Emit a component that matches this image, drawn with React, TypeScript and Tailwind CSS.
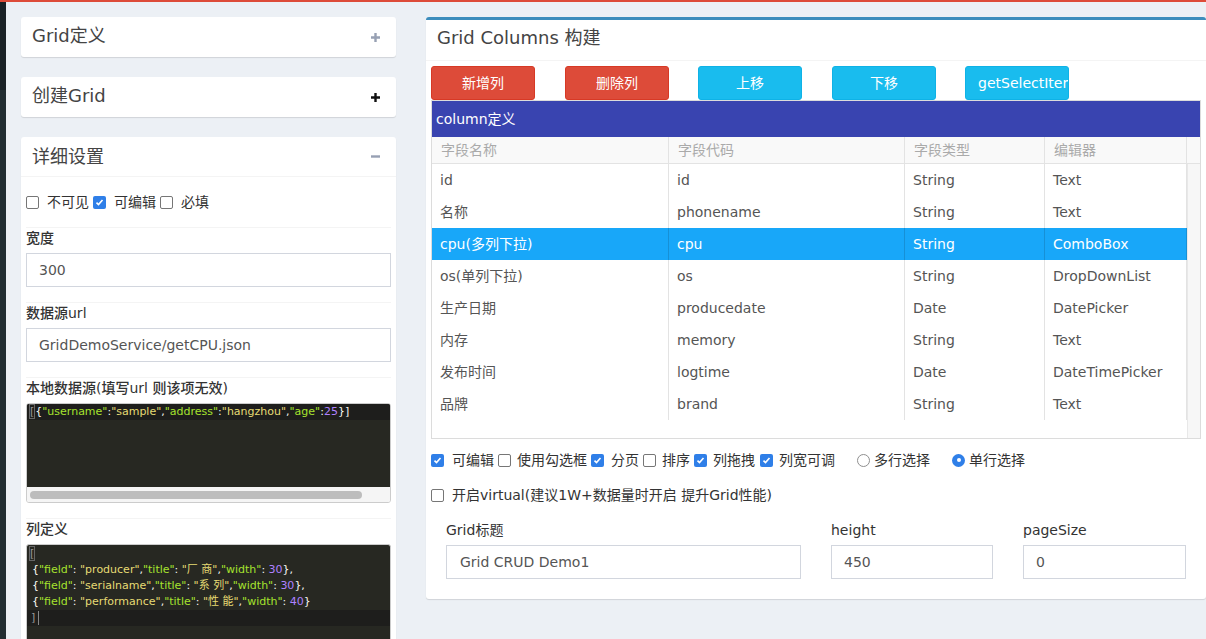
import React from "react";

const Plus = ({ color }: { color: string }) => (
  <svg width="11" height="11" viewBox="0 0 11 11">
    <path d="M5.5 1v9M1 5.5h9" stroke={color} strokeWidth="2.4" />
  </svg>
);
const Minus = ({ color }: { color: string }) => (
  <svg width="11" height="11" viewBox="0 0 11 11">
    <path d="M1 5.5h9" stroke={color} strokeWidth="2.4" />
  </svg>
);

const Check = ({ on }: { on: boolean }) =>
  on ? (
    <span className="w-[13px] h-[13px] rounded-[2px] bg-[#2f7fe8] flex items-center justify-center shrink-0">
      <svg width="9" height="9" viewBox="0 0 9 9">
        <path d="M1.5 4.6l2 2 4-4.6" stroke="#fff" strokeWidth="1.6" fill="none" />
      </svg>
    </span>
  ) : (
    <span className="w-[13px] h-[13px] rounded-[2px] border border-[#767676] bg-white shrink-0" />
  );

const Radio = ({ on }: { on: boolean }) =>
  on ? (
    <span className="w-[13px] h-[13px] rounded-full bg-[#2f7fe8] flex items-center justify-center shrink-0">
      <span className="w-[4px] h-[4px] rounded-full bg-white" />
    </span>
  ) : (
    <span className="w-[13px] h-[13px] rounded-full border border-[#8f8f8f] bg-white shrink-0" />
  );

const CardHead = ({ title, icon, border, up }: { title: string; icon: React.ReactNode; border?: boolean; up?: boolean }) => (
  <div
    className={
      "h-[40px] pl-[11px] pr-[15px] flex items-center justify-between text-[18px] text-[#444] " +
      (border ? "border-b border-[#f4f4f4]" : "")
    }
  >
    <span className={up ? "-translate-y-[2px]" : ""}>{title}</span>
    {icon}
  </div>
);

const K = ({ c }: { c: string }) => <span className="text-[#a6e22e]">{c}</span>;
const S = ({ c }: { c: string }) => <span className="text-[#e6db74]">{c}</span>;
const N = ({ c }: { c: string }) => <span className="text-[#ae81ff]">{c}</span>;

const rows = [
  ["id", "id", "String", "Text"],
  ["名称", "phonename", "String", "Text"],
  ["cpu(多列下拉)", "cpu", "String", "ComboBox"],
  ["os(单列下拉)", "os", "String", "DropDownList"],
  ["生产日期", "producedate", "Date", "DatePicker"],
  ["内存", "memory", "String", "Text"],
  ["发布时间", "logtime", "Date", "DateTimePicker"],
  ["品牌", "brand", "String", "Text"],
];

const widths = ["w-[237px]", "w-[236px]", "w-[140px]", "w-[142px]"];

export default function App() {
  return (
    <div className="w-[1206px] h-[639px] overflow-hidden bg-[#ecf0f5] flex flex-col font-[DejaVu_Sans,Noto_Sans_CJK_SC,sans-serif] text-[#333]">
      <div className="h-[2px] bg-[#dd4b39] shrink-0" />
      <div className="flex flex-1 min-h-0">
        <div className="w-[6px] shrink-0 flex flex-col">
          <div className="h-[88px] bg-[#1a2226]" />
          <div className="flex-1 bg-[#222d32]" />
        </div>
        <div className="flex flex-1 pt-[15px] pl-[15px] gap-[30px] items-start min-w-0">
          {/* left column */}
          <div className="w-[375px] shrink-0 flex flex-col gap-[20px]">
            <div className="bg-white rounded-[3px] shadow-[0_1px_1px_rgba(0,0,0,0.12)]">
              <CardHead title="Grid定义" icon={<Plus color="#97a0b3" />} up />
            </div>
            <div className="bg-white rounded-[3px] shadow-[0_1px_1px_rgba(0,0,0,0.12)]">
              <CardHead title="创建Grid" icon={<Plus color="#111" />} up />
            </div>
            <div className="bg-white rounded-[3px] shadow-[0_1px_1px_rgba(0,0,0,0.12)] h-[520px]">
              <CardHead title="详细设置" icon={<Minus color="#97a0b3" />} border />
              <div className="px-[5px] text-[14px]">
                <div className="pt-[15px] pb-[15px] h-[50px] flex items-center text-[#333]">
                  <Check on={false} />
                  <span className="ml-[8px] mr-[4px]">不可见</span>
                  <Check on={true} />
                  <span className="ml-[8px] mr-[4px]">可编辑</span>
                  <Check on={false} />
                  <span className="ml-[8px]">必填</span>
                </div>
                <div className="border-t border-[#f4f4f4] pb-[15px]">
                  <div className="h-[20px] leading-[20px] mb-[5px] font-medium">宽度</div>
                  <div className="h-[34px] border border-[#d2d6de] px-[12px] flex items-center text-[#555]">300</div>
                </div>
                <div className="border-t border-[#f4f4f4] pb-[15px]">
                  <div className="h-[20px] leading-[20px] mb-[5px] font-medium">数据源url</div>
                  <div className="h-[34px] border border-[#d2d6de] px-[12px] flex items-center text-[#555]">
                    GridDemoService/getCPU.json
                  </div>
                </div>
                <div className="border-t border-[#f4f4f4] pb-[15px]">
                  <div className="h-[20px] leading-[20px] mb-[5px] font-medium">本地数据源(填写url 则该项无效)</div>
                  <div className="h-[100px] border border-[#ccc] rounded-[3px] overflow-hidden flex flex-col">
                    <div className="flex-1 bg-[#272822]">
                      <div className="h-[16px] bg-[#1e1e1c] leading-[16px] text-[11px] pl-[2px] whitespace-nowrap text-[#f8f8f2]">
                        <span className="border border-[#666] text-[#999]">[</span>
                        {"{"}
                        <K c={'"username"'} />:<S c={'"sample"'} />,<K c={'"address"'} />:<S c={'"hangzhou"'} />,
                        <K c={'"age"'} />:<N c="25" />
                        {"}]"}
                      </div>
                    </div>
                    <div className="h-[15px] bg-[#f5f5f5] flex items-center px-[3px]">
                      <div className="w-[332px] h-[8px] rounded-full bg-[#bdbdbd]" />
                    </div>
                  </div>
                </div>
                <div className="border-t border-[#f4f4f4]">
                  <div className="h-[20px] leading-[20px] mb-[5px] font-medium">列定义</div>
                  <div className="h-[120px] border border-[#ccc] rounded-t-[3px] bg-[#272822] text-[11px] leading-[16px] text-[#f8f8f2] whitespace-nowrap pt-[1px]">
                    <div className="pl-[2px]">
                      <span className="border border-[#666] text-[#999]">[</span>
                    </div>
                    <div className="pl-[5px]">
                      {" {"}
                      <K c={'"field"'} />: <S c={'"producer"'} />,<K c={'"title"'} />: <S c={'"厂 商"'} />,
                      <K c={'"width"'} />: <N c="30" />
                      {"},"}
                    </div>
                    <div className="pl-[5px]">
                      {" {"}
                      <K c={'"field"'} />: <S c={'"serialname"'} />,<K c={'"title"'} />: <S c={'"系 列"'} />,
                      <K c={'"width"'} />: <N c="30" />
                      {"},"}
                    </div>
                    <div className="pl-[5px]">
                      {" {"}
                      <K c={'"field"'} />: <S c={'"performance"'} />,<K c={'"title"'} />: <S c={'"性 能"'} />,
                      <K c={'"width"'} />: <N c="40" />
                      {"}"}
                    </div>
                    <div className="pl-[4px] bg-[#1e1e1c] flex items-center text-[#999]">
                      ]<span className="ml-[3px] w-[1px] h-[14px] bg-[#888]" />
                    </div>
                  </div>
                </div>
              </div>
            </div>
          </div>

          {/* right panel */}
          <div className="w-[780px] shrink-0 bg-white rounded-[3px] border-t-[3px] border-[#3c8dbc] shadow-[0_1px_1px_rgba(0,0,0,0.12)]">
            <div className="h-[41px] border-b border-[#f4f4f4] px-[11px] flex items-center text-[18px] text-[#444]">
              <span className="-translate-y-[3px]">Grid Columns 构建</span>
            </div>
            <div className="p-[5px] pb-[20px] text-[14px]">
              <div className="flex h-[34px]">
                <button className="w-[104px] h-[34px] rounded-[3px] bg-[#dd4b39] border border-[#d73925] text-white">新增列</button>
                <button className="ml-[30px] w-[104px] h-[34px] rounded-[3px] bg-[#dd4b39] border border-[#d73925] text-white">删除列</button>
                <button className="ml-[29px] w-[104px] h-[34px] rounded-[3px] bg-[#19bcee] border border-[#0fb2e6] text-white">上移</button>
                <button className="ml-[30px] w-[104px] h-[34px] rounded-[3px] bg-[#19bcee] border border-[#0fb2e6] text-white">下移</button>
                <button className="ml-[29px] w-[104px] h-[34px] rounded-[3px] bg-[#19bcee] border border-[#0fb2e6] text-white overflow-hidden whitespace-nowrap text-left pl-[12px]">
                  getSelectItem
                </button>
              </div>
              {/* table */}
              <div className="border border-[#dcdcdc] h-[339px] flex flex-col">
                <div className="h-[36px] bg-[#3944b0] text-white flex items-center px-[4px] shrink-0">column定义</div>
                <div className="h-[27px] bg-[#f9f9f9] border-b border-[#e3e3e3] flex text-[#aaa] shrink-0">
                  {["字段名称", "字段代码", "字段类型", "编辑器"].map((h, i) => (
                    <div key={h} className={widths[i] + " border-r border-[#e3e3e3] px-[9px] flex items-center"}>
                      {h}
                    </div>
                  ))}
                  <div className="flex-1" />
                </div>
                <div className="flex flex-1">
                  <div className="w-[755px]">
                    {rows.map((r, ri) => {
                      const sel = ri === 2;
                      return (
                        <div key={ri} className={"h-[32px] flex " + (sel ? "bg-[#18a7f9] text-white" : "text-[#555]")}>
                          {r.map((c, ci) => (
                            <div
                              key={ci}
                              className={
                                widths[ci] +
                                " px-[8px] flex items-center whitespace-nowrap border-r " +
                                (sel ? "border-[#1690d6]" : "border-[#e3e3e3]")
                              }
                            >
                              {c}
                            </div>
                          ))}
                        </div>
                      );
                    })}
                  </div>
                  <div className="flex-1 bg-[#f7f7f7] border-l border-[#e8e8e8]" />
                </div>
              </div>
              {/* options */}
              <div className="mt-[11px] h-[20px] flex items-center text-[#333]">
                <Check on={true} />
                <span className="ml-[8px] mr-[4px]">可编辑</span>
                <Check on={false} />
                <span className="ml-[6px] mr-[4px]">使用勾选框</span>
                <Check on={true} />
                <span className="ml-[7px] mr-[4px]">分页</span>
                <Check on={false} />
                <span className="ml-[6px] mr-[4px]">排序</span>
                <Check on={true} />
                <span className="ml-[6px] mr-[5px]">列拖拽</span>
                <Check on={true} />
                <span className="ml-[6px] mr-[22px]">列宽可调</span>
                <Radio on={false} />
                <span className="ml-[4px] mr-[22px]">多行选择</span>
                <Radio on={true} />
                <span className="ml-[4px]">单行选择</span>
              </div>
              <div className="mt-[15px] h-[20px] flex items-center text-[#333]">
                <Check on={false} />
                <span className="ml-[8px]">开启virtual(建议1W+数据量时开启 提升Grid性能)</span>
              </div>
              <div className="mt-[15px] grid grid-cols-[385px_192px_193px]">
                <div className="px-[15px]">
                  <div className="h-[20px] leading-[20px] mb-[5px]">Grid标题</div>
                  <div className="h-[34px] border border-[#d2d6de] px-[13px] flex items-center text-[#555]">Grid CRUD Demo1</div>
                </div>
                <div className="px-[15px]">
                  <div className="h-[20px] leading-[20px] mb-[5px]">height</div>
                  <div className="h-[34px] border border-[#d2d6de] px-[12px] flex items-center text-[#555]">450</div>
                </div>
                <div className="px-[15px]">
                  <div className="h-[20px] leading-[20px] mb-[5px]">pageSize</div>
                  <div className="h-[34px] border border-[#d2d6de] px-[12px] flex items-center text-[#555]">0</div>
                </div>
              </div>
            </div>
          </div>
        </div>
      </div>
    </div>
  );
}
